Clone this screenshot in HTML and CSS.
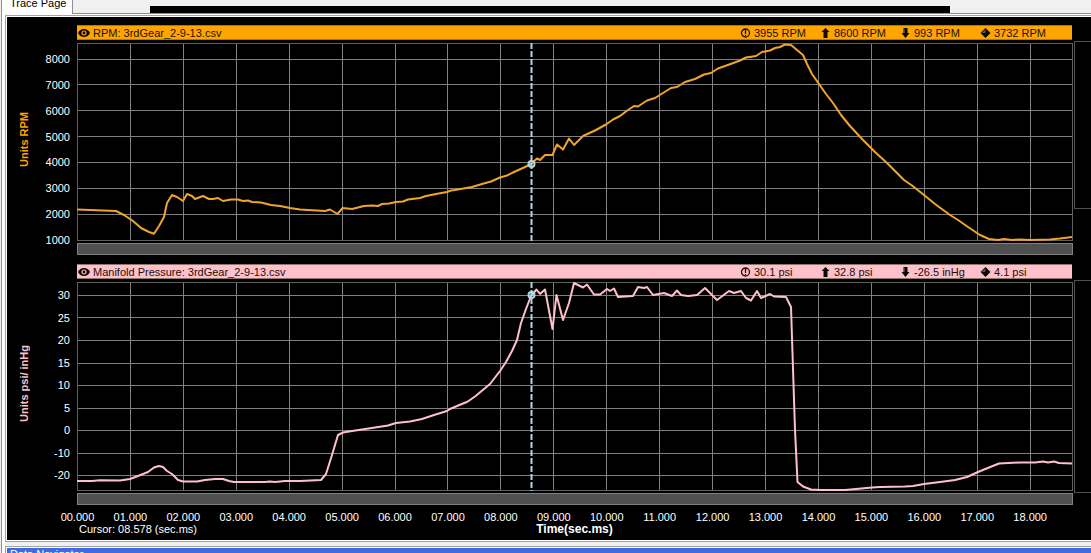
FILE: index.html
```html
<!DOCTYPE html>
<html lang="en">
<head>
    <meta charset="UTF-8">
    <title>Trace Page</title>
    <link rel="stylesheet" href="styles.css">
</head>
<body>
    <!-- shared icons -->
    <svg class="icon-defs">
        <symbol id="icon-eye" viewBox="0 0 12 10">
            <path d="M0 5Q2 1 6 1T12 5Q10 9 6 9T0 5Z" fill="#100800"/>
            <circle cx="6" cy="5" r="2" fill="none" stroke="currentColor" stroke-width="1.2"/>
        </symbol>
        <symbol id="icon-current" viewBox="0 0 10 10">
            <circle cx="5" cy="5" r="4" fill="none" stroke="#201000" stroke-width="1.3"/>
            <path d="M5 1V6M5 7V8" stroke="#201000" stroke-width="1.3"/>
        </symbol>
        <symbol id="icon-max" viewBox="0 0 10 10">
            <path d="M5 0L9 4H7V10H3V4H1Z" fill="#080808"/>
        </symbol>
        <symbol id="icon-min" viewBox="0 0 10 10">
            <path d="M3 0H7V5H9L5 10L1 5H3Z" fill="#080808"/>
            <path d="M4 1V5" stroke="#444" stroke-width="1"/>
        </symbol>
        <symbol id="icon-avg" viewBox="0 0 10 10">
            <path d="M5 0L10 5L5 10L0 5Z" fill="#080808"/>
            <path d="M5 1V5H1Z" fill="#555"/>
        </symbol>
    </svg>

    <div class="window">
        <div class="tab-strip">
            <button class="tab">Trace Page</button>
            <div class="title-mask"></div>
        </div>

        <div class="page">
            <main class="trace-frame">
                <section class="trace rpm">
                    <div class="trace-header">
                        <svg class="eye"><use href="#icon-eye"/></svg>
                        <span class="trace-name">RPM: 3rdGear_2-9-13.csv</span>
                        <span class="stat"><svg><use href="#icon-current"/></svg>3955 RPM</span>
                        <span class="stat"><svg><use href="#icon-max"/></svg>8600 RPM</span>
                        <span class="stat"><svg><use href="#icon-min"/></svg>993 RPM</span>
                        <span class="stat"><svg><use href="#icon-avg"/></svg>3732 RPM</span>
                    </div>
                    <div class="units">Units RPM</div>
                    <div class="y-labels">
                        <span>8000</span>
                        <span>7000</span>
                        <span>6000</span>
                        <span>5000</span>
                        <span>4000</span>
                        <span>3000</span>
                        <span>2000</span>
                        <span>1000</span>
                    </div>
                    <svg class="plot" viewBox="77 43 996 198" preserveAspectRatio="none">
                        <path class="grid" d="M77 59.5H1073M77 84.5H1073M77 110.5H1073M77 136.5H1073M77 162.5H1073M77 188.5H1073M77 214.5H1073M130.5 43V241M183.5 43V241M236.5 43V241M289.5 43V241M342.5 43V241M395.5 43V241M447.5 43V241M500.5 43V241M553.5 43V241M606.5 43V241M659.5 43V241M712.5 43V241M765.5 43V241M818.5 43V241M871.5 43V241M924.5 43V241M977.5 43V241M1030.5 43V241"/>
                        <rect class="edge" x="77.5" y="43.5" width="995" height="197"/>
                        <polyline class="line" points="77,209.5 116,211 124,215 133,221 141,228 149,232 154,233.7 159,226 164,217 167,203 172,195 177,197 183,201 187,194 192,196 195,199 203,196 209,199 213,199 218,198 223,201 231,199.5 238,199.5 243,201 248,200.5 252,202 261,202.5 271,205 280,206 290,208 300,209.5 325,211 330,209.5 337.5,214 342.5,208 352,209 364,206 372,205.5 378,206 382,204 389,203.5 396,202 403,201.5 408,199.5 420,198 426,196 436,194 447,192 451,190.5 455,190 472,187 482,184 491,181.5 500,177.5 507,175.5 514,172 524,167.5 531,164 537,158.5 540,160 545,155 552.5,155 557,144.5 563,149.5 569,138.5 574,145 583,136 595,130.5 606,124.5 613,119.5 620,116 628,110 634,106 638,106.5 647,100.5 655,98 663,93 671,88 677,87 685,82 695,79 704,74.5 711,73 718,68.5 732,63.5 740,60.5 746,57.5 756,56 762,52 770,50.5 775,48 780,47 785,44.5 791,45 797,50 803,55 807,64 812,74 819,84 826,94 833,103 841,115 850,126 863,140 875,152 887,163 897,173 904,180 912,185.5 924,195 935,204 950,215 958,220 968,227 980,235 989,239 998,240 1004,239 1012,240 1020,239.5 1030,240 1050,239.5 1060,238.5 1072,237"/>
                        <path class="cursor" d="M531.5 43V241"/>
                        <circle class="marker" cx="531.5" cy="164" r="3"/>
                    </svg>
                    <div class="side-box"></div>
                    <div class="scroll-bar"></div>
                </section>

                <section class="trace pressure">
                    <div class="trace-header">
                        <svg class="eye"><use href="#icon-eye"/></svg>
                        <span class="trace-name">Manifold Pressure: 3rdGear_2-9-13.csv</span>
                        <span class="stat"><svg><use href="#icon-current"/></svg>30.1 psi</span>
                        <span class="stat"><svg><use href="#icon-max"/></svg>32.8 psi</span>
                        <span class="stat"><svg><use href="#icon-min"/></svg>-26.5 inHg</span>
                        <span class="stat"><svg><use href="#icon-avg"/></svg>4.1 psi</span>
                    </div>
                    <div class="units">Units psi/ inHg</div>
                    <div class="y-labels">
                        <span>30</span>
                        <span>25</span>
                        <span>20</span>
                        <span>15</span>
                        <span>10</span>
                        <span>5</span>
                        <span>0</span>
                        <span>-10</span>
                        <span>-20</span>
                    </div>
                    <svg class="plot" viewBox="77 282 996 209" preserveAspectRatio="none">
                        <path class="grid" d="M77 295.5H1073M77 317.5H1073M77 340.5H1073M77 363.5H1073M77 385.5H1073M77 408.5H1073M77 430.5H1073M77 453.5H1073M77 475.5H1073M130.5 282V491M183.5 282V491M236.5 282V491M289.5 282V491M342.5 282V491M395.5 282V491M447.5 282V491M500.5 282V491M553.5 282V491M606.5 282V491M659.5 282V491M712.5 282V491M765.5 282V491M818.5 282V491M871.5 282V491M924.5 282V491M977.5 282V491M1030.5 282V491"/>
                        <rect class="edge" x="77.5" y="282.5" width="995" height="208"/>
                        <polyline class="line" points="77,481 92,481 100,480.3 120,480.5 130,479 138,476 148,472 154,467.5 159,466 163,467 167,471 172,474 178,480 183,481.5 197,481.5 205,480 215,479 223,479 229,481 234,482 265,482 270,481.5 275,482 285,481 300,481 321,480 326,474 332,455 338,435 343,432.5 352,431 362,429.5 375,427.5 388,425.5 396,423 410,421.5 422,419 434,415 447,411 450,409 457,406 463,403.5 467,402 475,396.5 490,384 500,371 506,362 512,351 517,340 521,323 526,309 531,296 536.5,289.5 540,294 545,289.5 552.5,329 556.5,295 563,320 569,303 574,283 583,287.5 587,284.5 594,294.5 600,294.5 607,289 610,291 614,288.5 618,297 633,296 638,287 644,288 647,287 653,295 664,293 672,296 677,290.5 681,295 688,296 697,295 705,288 717,300 729,291 734,293 741,291 746,298 751,300.5 757,291 761,298 770,294 774,296.5 786,297 791,307 795,430 797.5,482 803,486.5 811,489.5 820,490 845,490 856,489 872,487.5 880,487 905,486.5 913,486 924,484 940,482 955,480 967,477 978,472 989,467.5 999,463.5 1020,462.5 1035,462.5 1043,461.5 1048,462.5 1054,461.5 1059,463 1072,463.5"/>
                        <path class="cursor" d="M531.5 282V491"/>
                        <circle class="marker" cx="531.5" cy="295" r="3"/>
                    </svg>
                    <div class="side-box"></div>
                    <div class="scroll-bar"></div>
                </section>

                <div class="x-labels">
                    <span>00.000</span>
                    <span>01.000</span>
                    <span>02.000</span>
                    <span>03.000</span>
                    <span>04.000</span>
                    <span>05.000</span>
                    <span>06.000</span>
                    <span>07.000</span>
                    <span>08.000</span>
                    <span>09.000</span>
                    <span>10.000</span>
                    <span>11.000</span>
                    <span>12.000</span>
                    <span>13.000</span>
                    <span>14.000</span>
                    <span>15.000</span>
                    <span>16.000</span>
                    <span>17.000</span>
                    <span>18.000</span>
                </div>
                <div class="axis-footer">
                    <span class="cursor-time">Cursor: 08.578 (sec.ms)</span>
                    <span class="axis-title">Time(sec.ms)</span>
                </div>
            </main>

            <div class="navigator">
                <div class="navigator-title">Data Navigator</div>
            </div>
        </div>
    </div>
</body>
</html>
```
FILE: styles.css
```css
* {
    box-sizing: border-box;
}
body {
    margin: 0;
    height: 100vh;
    overflow: hidden;
    background-color: #f0f0f0;
    color: #000;
    font-family: "Liberation Sans", Arial, sans-serif;
    font-size: 11px;
    line-height: 14px;
}
.icon-defs {
    display: none;
}
.window {
    height: 100%;
    margin-left: 1px;
    border-left: 1px solid #8c9098;
}
/* tab strip */
.tab-strip {
    display: flex;
    align-items: flex-end;
    height: 13px;
}
.tab {
    display: flex;
    align-items: flex-end;
    width: 71px;
    height: 22px;
    margin: 0 0 -1px;
    padding: 0 0 4px 8px;
    border: 0;
    border-right: 1px solid #8c9098;
    background-color: #fff;
    font: inherit;
    white-space: nowrap;
    z-index: 1;
}
.title-mask {
    width: 73.5%;
    height: 7px;
    margin-left: 77px;
    background-color: #000;
}
.page {
    padding: 1px 0 0 3px;
    border-top: 1px solid #8c9098;
    background-color: #fff;
}
/* trace panel */
.trace-frame {
    padding: 9px 0 5px 1px;
    border: solid #a0a4a8;
    border-width: 1px 0 1px 1px;
    box-shadow: inset 1px 1px #fff, inset 0 -1px #fff;
    background-color: #000;
    color: #fff;
}
.trace {
    display: grid;
    grid-template-columns: 34px 36px 1fr 18px;
}
.rpm {
    grid-template-rows: 15px 3px 198px 2px 12px;
    margin-bottom: 9px;
    color: #ffa500;
}
.pressure {
    grid-template-rows: 15px 3px 209px 2px 12px;
    color: #ffc0cb;
}
.trace-header {
    grid-area: 1 / 3;
    display: flex;
    align-items: center;
    margin-right: 1px;
    border: 1px solid #8c7868;
    border-width: 1px 0;
    background-color: currentColor;
}
.trace-name,
.stat {
    color: #201008;
    white-space: nowrap;
}
.trace-name {
    flex: 1;
    padding-left: 3px;
}
.stat {
    display: flex;
    align-items: center;
    gap: 3px;
    width: 80px;
}
.stat:last-child {
    width: 92px;
}
.stat svg {
    width: 11px;
    height: 10px;
}
.eye {
    width: 12px;
    height: 10px;
    margin-left: 1px;
}
.units {
    grid-area: 3 / 1;
    justify-self: center;
    align-self: center;
    margin-bottom: 6px;
    font-weight: bold;
    white-space: nowrap;
    writing-mode: vertical-rl;
    transform: rotate(180deg);
}
.y-labels {
    grid-area: 3 / 2;
    display: flex;
    flex-direction: column;
    justify-content: space-between;
    margin: 9px 7px -6px 0;
    color: #fff;
    text-align: right;
}
.pressure .y-labels {
    margin-top: 6px;
    margin-bottom: 9px;
}
.plot {
    grid-area: 3 / 3;
    display: block;
    width: 100%;
    height: 100%;
}
.plot * {
    fill: none;
    vector-effect: non-scaling-stroke;
}
.grid {
    stroke: #808080;
    shape-rendering: crispEdges;
}
.edge {
    stroke: #606060;
    shape-rendering: crispEdges;
}
.line {
    stroke: currentColor;
    stroke-width: 2;
    stroke-linejoin: round;
}
.rpm .line {
    stroke: #f0a42c;
}
.cursor {
    stroke: #add8e6;
    stroke-width: 2;
    stroke-dasharray: 6 2;
}
.marker {
    stroke: #add8e6;
    stroke-width: 2;
}
.side-box {
    grid-area: 3 / 4;
    margin: -2px 0 32px 1px;
    border: 1px solid #505050;
    border-right: 0;
}
.pressure .side-box {
    margin-bottom: -2px;
}
.scroll-bar {
    grid-area: 5 / 3;
    border: 1px solid #808080;
    background-color: #505050;
}
/* time axis */
.x-labels {
    display: grid;
    grid-template-columns: repeat(19, 100fr) 29fr;
    margin: 5px 19px 0 44px;
    text-align: center;
}
.axis-footer {
    display: grid;
    margin: -2px 19px 0 70px;
}
.axis-footer span {
    grid-area: 1 / 1;
}
.cursor-time {
    padding-left: 2px;
}
.axis-title {
    font-size: 12px;
    font-weight: bold;
    text-align: center;
}
/* data navigator */
.navigator {
    padding-top: 4px;
    background-color: #f0f0f0;
}
.navigator-title {
    padding-left: 4px;
    border: solid #a0a4a8;
    border-width: 1px 0 0 1px;
    box-shadow: inset 1px 1px #fff;
    background-color: #4169e1;
    color: #fff;
    line-height: 14px;
}
```
